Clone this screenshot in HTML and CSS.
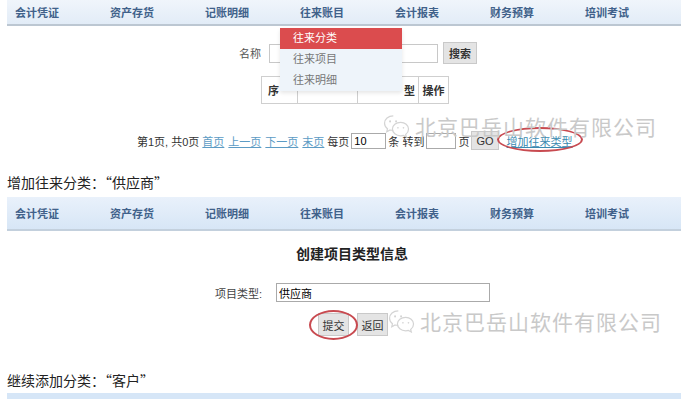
FILE: index.html
```html
<!DOCTYPE html>
<html lang="zh-CN">
<head>
    <meta charset="UTF-8">
    <title>往来分类</title>
    <link rel="stylesheet" href="styles.css">
</head>
<body>
    <div class="shot shot-list">
        <div class="nav">
            <span>会计凭证</span>
            <span>资产存货</span>
            <span>记账明细</span>
            <span>往来账目</span>
            <span>会计报表</span>
            <span>财务预算</span>
            <span>培训考试</span>
        </div>

        <div class="search-row">
            <label>名称</label>
            <input type="text" class="name-input">
            <button class="gray-btn">搜索</button>
        </div>

        <table class="grid">
            <tr>
                <th class="c1">序</th>
                <th class="c2"></th>
                <th class="c3">型</th>
                <th class="c4">操作</th>
            </tr>
        </table>

        <div class="pager">
            第1页, 共0页 <a>首页</a> <a>上一页</a> <a>下一页</a> <a>末页</a> 每页<input class="small-input" value="10">条 转到<input class="small-input short">页 <button class="go-btn">GO</button> <a class="add-link">增加往来类型</a>
        </div>

        <!-- dropdown from 往来账目 -->
        <ul class="dropdown">
            <li class="active">往来分类</li>
            <li>往来项目</li>
            <li>往来明细</li>
        </ul>

        <div class="ring ring-add"></div>

        <div class="watermark wm-1">
            <svg class="wm-icon" viewBox="0 0 30 26" width="28" height="24">
                <path d="M11 2C5.5 2 1.5 5.6 1.5 10c0 2.4 1.2 4.5 3.2 6l-0.8 3.2 3.6-1.9c1.1 0.3 2.3 0.5 3.5 0.5" fill="none" stroke="#d4d4d4" stroke-width="1.3"/>
                <path d="M19 9c-5 0-9 3.3-9 7.3s4 7.3 9 7.3c1 0 2-0.1 2.9-0.4l3.2 1.7-0.7-2.8c1.9-1.4 3.1-3.4 3.1-5.8 0-4-4-7.3-8.5-7.3z" fill="none" stroke="#d4d4d4" stroke-width="1.3"/>
                <circle cx="7.5" cy="8" r="1.1" fill="#d4d4d4"/>
                <circle cx="14" cy="8" r="1.1" fill="#d4d4d4"/>
                <circle cx="16" cy="15" r="0.9" fill="#d4d4d4"/>
                <circle cx="22" cy="15" r="0.9" fill="#d4d4d4"/>
            </svg>
            <span>北京巴岳山软件有限公司</span>
        </div>
    </div>

    <p class="caption">增加往来分类：“供应商”</p>

    <div class="shot shot-form">
        <div class="nav nav-tall">
            <span>会计凭证</span>
            <span>资产存货</span>
            <span>记账明细</span>
            <span>往来账目</span>
            <span>会计报表</span>
            <span>财务预算</span>
            <span>培训考试</span>
        </div>

        <h2 class="form-title">创建项目类型信息</h2>

        <div class="form-row">
            <label>项目类型:</label>
            <input type="text" class="type-input" value="供应商">
        </div>

        <div class="btn-row">
            <button class="gray-btn">提交</button>
            <button class="gray-btn">返回</button>
        </div>

        <div class="ring ring-submit"></div>

        <div class="watermark wm-2">
            <svg class="wm-icon" viewBox="0 0 30 26" width="28" height="24">
                <path d="M11 2C5.5 2 1.5 5.6 1.5 10c0 2.4 1.2 4.5 3.2 6l-0.8 3.2 3.6-1.9c1.1 0.3 2.3 0.5 3.5 0.5" fill="none" stroke="#d4d4d4" stroke-width="1.3"/>
                <path d="M19 9c-5 0-9 3.3-9 7.3s4 7.3 9 7.3c1 0 2-0.1 2.9-0.4l3.2 1.7-0.7-2.8c1.9-1.4 3.1-3.4 3.1-5.8 0-4-4-7.3-8.5-7.3z" fill="none" stroke="#d4d4d4" stroke-width="1.3"/>
                <circle cx="7.5" cy="8" r="1.1" fill="#d4d4d4"/>
                <circle cx="14" cy="8" r="1.1" fill="#d4d4d4"/>
                <circle cx="16" cy="15" r="0.9" fill="#d4d4d4"/>
                <circle cx="22" cy="15" r="0.9" fill="#d4d4d4"/>
            </svg>
            <span>北京巴岳山软件有限公司</span>
        </div>
    </div>

    <p class="caption caption-2">继续添加分类：“客户”</p>

    <div class="next-bar"></div>
</body>
</html>
```

FILE: styles.css
```css
* {
    margin: 0;
    padding: 0;
    box-sizing: border-box;
}

body {
    background: #fff;
    font-family: "Liberation Sans", "Noto Sans CJK SC", sans-serif;
    color: #333;
    overflow: hidden;
}

.shot {
    position: relative;
    margin-left: 7px;
}

.shot-list {
    height: 160px;
}

.nav {
    display: flex;
    gap: 48px;
    align-items: center;
    height: 26px;
    padding-left: 8px;
    background: linear-gradient(to bottom, #f0f5fb, #e2ecf7);
    border-bottom: 2px solid #bcc7d2;
}

.nav span {
    font-size: 11px;
    font-weight: bold;
    color: #40618a;
    width: 47px;
    white-space: nowrap;
}

.nav-tall {
    height: 34px;
    background: linear-gradient(to bottom, #e9f1fb, #d7e6f6);
    border-bottom: 2px solid #c3d0dd;
}

.search-row {
    display: flex;
    align-items: center;
    padding-left: 232px;
    margin-top: 16px;
    font-size: 11px;
}

.search-row label {
    color: #555;
    margin-right: 8px;
}

.name-input {
    width: 169px;
    height: 19px;
    border: 1px solid #c8c8c8;
}

.gray-btn {
    font-family: "Liberation Sans", "Noto Sans CJK SC", sans-serif;
    font-size: 11px;
    font-weight: bold;
    color: #333;
    background: #e4e4e4;
    border: 1px solid #c9c9c9;
    height: 22px;
    padding: 0 5px;
}

.search-row .gray-btn {
    margin-left: 5px;
}

.grid {
    border-collapse: collapse;
    margin-left: 254px;
    margin-top: 12px;
    font-size: 11px;
}

.grid th {
    border: 1px solid #cfcfcf;
    height: 27px;
    color: #333;
}

.grid .c1 { width: 36px; text-align: left; padding-left: 6px; }
.grid .c2 { width: 60px; }
.grid .c3 { width: 61px; text-align: right; padding-right: 3px; }
.grid .c4 { width: 30px; }

.pager {
    margin-left: 130px;
    margin-top: 27px;
    font-size: 11px;
    color: #333;
    display: flex;
    align-items: center;
    gap: 2px;
    white-space: nowrap;
}

.pager a {
    color: #5c9bc4;
    text-decoration: underline;
    margin: 0 1px;
}

.small-input {
    width: 35px;
    height: 16px;
    border: 1px solid #aaa;
    font-size: 11px;
    padding-left: 2px;
}

.small-input.short {
    width: 30px;
}

.go-btn {
    font-size: 11px;
    background: #e4e4e4;
    border: 1px solid #c9c9c9;
    height: 19px;
    padding: 0 4px;
    color: #333;
}

.pager .add-link {
    color: #3a89b0;
    margin-left: 6px;
}

.dropdown {
    position: absolute;
    left: 273px;
    top: 28px;
    width: 122px;
    list-style: none;
    background: #eef4fa;
    box-shadow: 0 2px 4px rgba(0, 0, 0, 0.1);
    font-size: 11px;
}

.dropdown li {
    height: 21px;
    line-height: 21px;
    padding-left: 13px;
    color: #777;
}

.dropdown li.active {
    background: #db4c4e;
    color: #fff;
}

.ring {
    position: absolute;
    border: 2px solid #c84a50;
    border-radius: 50%;
}

.ring-add {
    left: 490px;
    top: 127px;
    width: 86px;
    height: 25px;
}

.watermark {
    position: absolute;
    display: flex;
    align-items: center;
    gap: 4px;
    color: #c9c9c9;
    font-family: "Noto Sans CJK SC", sans-serif;
    font-size: 21px;
    letter-spacing: 1px;
    white-space: nowrap;
}

.wm-1 {
    left: 376px;
    top: 111px;
}

.wm-2 {
    left: 381px;
    top: 109px;
}

.caption {
    font-family: "Noto Sans CJK SC", sans-serif;
    font-size: 14px;
    color: #222;
    margin: 12px 0 0 7px;
    line-height: 20px;
}

.shot-form {
    margin-top: 5px;
    height: 153px;
}

.form-title {
    text-align: center;
    font-size: 14px;
    font-weight: bold;
    color: #222;
    margin-top: 12px;
    padding-left: 16px;
}

.form-row {
    display: flex;
    align-items: center;
    padding-left: 208px;
    margin-top: 20px;
    font-size: 11px;
}

.form-row label {
    color: #444;
    width: 61px;
}

.type-input {
    width: 214px;
    height: 19px;
    border: 1px solid #aaa;
    font-size: 11px;
    padding-left: 2px;
    font-family: "Liberation Sans", "Noto Sans CJK SC", sans-serif;
}

.btn-row {
    display: flex;
    gap: 8px;
    padding-left: 311px;
    margin-top: 11px;
}

.btn-row .gray-btn {
    height: 23px;
    width: 31px;
    padding: 0;
    font-weight: normal;
}

.ring-submit {
    left: 302px;
    top: 113px;
    width: 49px;
    height: 30px;
}

.caption-2 {
    margin-top: 20px;
}

.next-bar {
    margin: 3px 0 0 7px;
    height: 20px;
    background: #d6e6f7;
}
```
